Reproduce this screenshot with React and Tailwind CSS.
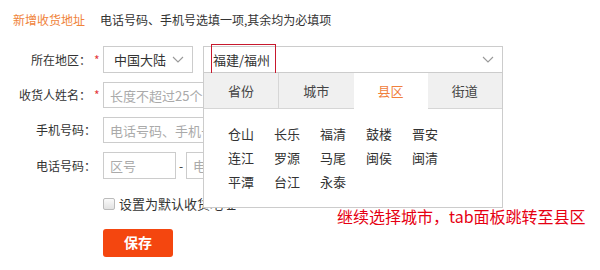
import { useState } from "react";

const FONT = { fontFamily: '"Microsoft YaHei", "Noto Sans CJK SC", "Noto Sans", sans-serif' };

const TABS = ["省份", "城市", "县区", "街道"];
const AREAS = [
  "仓山", "长乐", "福清", "鼓楼", "晋安",
  "连江", "罗源", "马尾", "闽侯", "闽清",
  "平潭", "台江", "永泰",
];

function Chevron({ className = "" }) {
  return (
    <svg width="12" height="7" viewBox="0 0 12 7" className={className}>
      <path d="M1 1l5 5 5-5" fill="none" stroke="#999" strokeWidth="1.1" />
    </svg>
  );
}

function Label({ text, required }) {
  if (required) {
    return (
      <div className="flex shrink-0 items-center">
        <span className="w-[91px] text-right">{text}</span>
        <span className="w-[12px] pl-[3px] text-[#e4393c]">*</span>
      </div>
    );
  }
  return <span className="w-[103px] shrink-0 pr-[7px] text-right">{text}</span>;
}

export default function App() {
  const [activeTab, setActiveTab] = useState(2);

  return (
    <div style={FONT} className="relative h-[270px] w-[600px] bg-white text-[12px] text-[#333]">
      {/* Header */}
      <div className="flex items-center pl-[13px] pt-[12px] leading-[16px]">
        <span className="text-[#f0833a]">新增收货地址</span>
        <span className="ml-[15px]">电话号码、手机号选填一项,其余均为必填项</span>
      </div>

      <div className="mt-[18px] flex flex-col gap-[9px]">
        {/* Region */}
        <div className="flex h-[27px] items-center">
          <Label text="所在地区：" required />
          <div className="flex h-[27px] w-[90px] items-center justify-between border border-[#ccc] pl-[10px] pr-[8px] text-[13px]">
            <span>中国大陆</span>
            <Chevron />
          </div>
          <div className="relative ml-[10px] w-[300px]">
            <div className="flex h-[27px] items-center justify-between border border-[#ccc] pl-[9px] pr-[8px] text-[13px]">
              <span>福建/福州</span>
              <Chevron />
            </div>
            <div className="absolute left-[8px] top-[-2px] h-[31px] w-[65px] border border-[#c8182d]" />

            {/* Dropdown panel */}
            <div className="absolute left-0 top-[27px] z-10 w-[300px] border border-t-0 border-[#ccc] bg-white">
              <div className="flex h-[36px]">
                {TABS.map((t, i) => (
                  <button
                    key={t}
                    onClick={() => setActiveTab(i)}
                    className={`flex flex-1 items-center justify-center text-[13px] ${
                      i === activeTab
                        ? "bg-white text-[#f0803c]"
                        : "border-b border-[#d6d6d6] bg-[#f0f0f0] text-[#444]"
                    } ${i > 0 && i !== activeTab && i - 1 !== activeTab ? "border-l border-l-[#d6d6d6]" : ""}`}
                  >
                    {t}
                  </button>
                ))}
              </div>
              <div className="grid grid-cols-[repeat(5,46px)] pb-[13px] pl-[24px] pt-[13px] leading-[24px] text-[13px]">
                {AREAS.map((a) => (
                  <span key={a}>{a}</span>
                ))}
              </div>
            </div>
          </div>
        </div>

        {/* Name */}
        <div className="flex h-[26px] items-center">
          <Label text="收货人姓名：" required />
          <input
            placeholder="长度不超过25个字符"
            className="h-[26px] w-[200px] border border-[#ccc] px-[6px] text-[13px] outline-none placeholder:text-[#aaa]"
          />
        </div>

        {/* Mobile */}
        <div className="flex h-[26px] items-center">
          <Label text="手机号码：" />
          <input
            placeholder="电话号码、手机号选填一项"
            className="h-[26px] w-[200px] border border-[#ccc] px-[6px] text-[13px] outline-none placeholder:text-[#aaa]"
          />
        </div>

        {/* Phone */}
        <div className="flex h-[27px] items-center">
          <Label text="电话号码：" />
          <input
            placeholder="区号"
            className="h-[27px] w-[73px] border border-[#ccc] px-[6px] text-[13px] outline-none placeholder:text-[#aaa]"
          />
          <span className="w-[10px] text-center">-</span>
          <input
            placeholder="电话号码"
            className="h-[27px] w-[120px] border border-[#ccc] px-[6px] text-[13px] outline-none placeholder:text-[#aaa]"
          />
        </div>
      </div>

      {/* Default checkbox */}
      <label className="ml-[103px] mt-[15px] flex items-center gap-[4px] text-[13px]">
        <span className="h-[12px] w-[12px] rounded-[2px] border border-[#bbb] bg-gradient-to-b from-[#fafafa] to-[#e2e2e2]" />
        <span>设置为默认收货地址</span>
      </label>

      <button className="ml-[103px] mt-[15px] flex h-[28px] w-[70px] items-center justify-center rounded-[3px] bg-[#f4460f] text-[14px] font-bold text-white">
        保存
      </button>

      {/* Annotation */}
      <span className="absolute left-[337px] top-[206px] text-[16px] leading-[20px] text-[#e60012]">
        继续选择城市，tab面板跳转至县区
      </span>
    </div>
  );
}
